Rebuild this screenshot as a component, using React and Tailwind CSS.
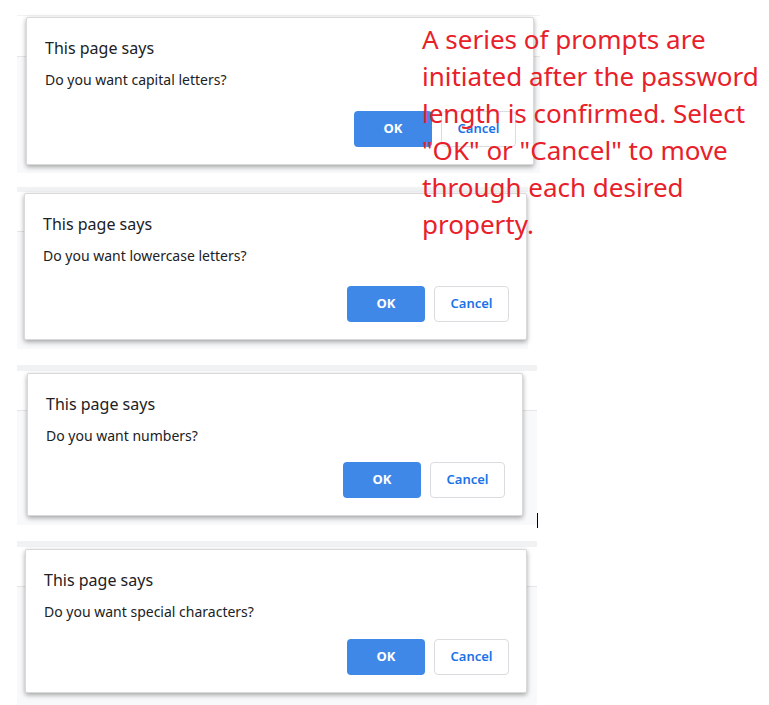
import React from "react";

function Dialog({ msg, className }) {
  return (
    <div
      className={
        "absolute bg-white border border-[#d9d9d9] rounded-[2px] shadow-[0_2px_5px_rgba(0,0,0,0.35)] " +
        className
      }
    >
      <div className="pl-[18px] pt-[20px] text-[16px] leading-[20px] text-[#202124]">This page says</div>
      <div className="pl-[18px] pt-[12px] text-[14px] leading-[19px] text-[#202124]">{msg}</div>
      <div className="absolute right-[17px] bottom-[17px] flex gap-[9px]">
        <div className="w-[78px] h-[36px] rounded-[4px] bg-[#4088e8] text-white font-bold text-[13px] flex items-center justify-center">
          OK
        </div>
        <div className="w-[75px] h-[36px] rounded-[4px] bg-white border border-[#dadce0] text-[#1a73e8] font-semibold text-[13px] flex items-center justify-center">
          Cancel
        </div>
      </div>
    </div>
  );
}

function Panel({ top, width, height, bandH, lineY, dialog, children }) {
  return (
    <div className="relative ml-[17px]" style={{ marginTop: top, width, height }}>
      <div className="bg-[#f1f2f4]" style={{ height: bandH }} />
      <div className="bg-white border-b border-[#e6e6e6]" style={{ height: lineY }} />
      <div className="bg-[#f8f9fa]" style={{ height: height - bandH - lineY - 1 }} />
      {dialog}
      {children}
    </div>
  );
}

export default function App() {
  return (
    <div
      className="relative w-[769px] h-[705px] bg-white overflow-hidden"
      style={{ fontFamily: '"Noto Sans", "Open Sans", sans-serif' }}
    >
      <Panel
        top={15}
        width={523}
        height={159}
        bandH={1}
        lineY={41}
        dialog={<Dialog msg="Do you want capital letters?" className="left-[9px] top-[2px] w-[508px] h-[148px]" />}
      />
      <Panel
        top={13}
        width={511}
        height={163}
        bandH={5}
        lineY={40}
        dialog={<Dialog msg="Do you want lowercase letters?" className="left-[7px] top-[6px] w-[503px] h-[147px]" />}
      />
      <Panel
        top={15}
        width={520}
        height={161}
        bandH={6}
        lineY={40}
        dialog={<Dialog msg="Do you want numbers?" className="left-[10px] top-[8px] w-[496px] h-[143px]" />}
      >
        <div className="absolute left-[520px] top-[148px] w-[1px] h-[15px] bg-black" />
      </Panel>
      <Panel
        top={15}
        width={520}
        height={165}
        bandH={6}
        lineY={40}
        dialog={<Dialog msg="Do you want special characters?" className="left-[8px] top-[8px] w-[502px] h-[144px]" />}
      />
      <div className="absolute left-[422px] top-[21px] w-[350px] text-[26px] leading-[37px] text-[#e8202a]">
        A series of prompts are initiated after the password length is confirmed. Select "OK" or "Cancel" to move through each desired property.
      </div>
    </div>
  );
}
